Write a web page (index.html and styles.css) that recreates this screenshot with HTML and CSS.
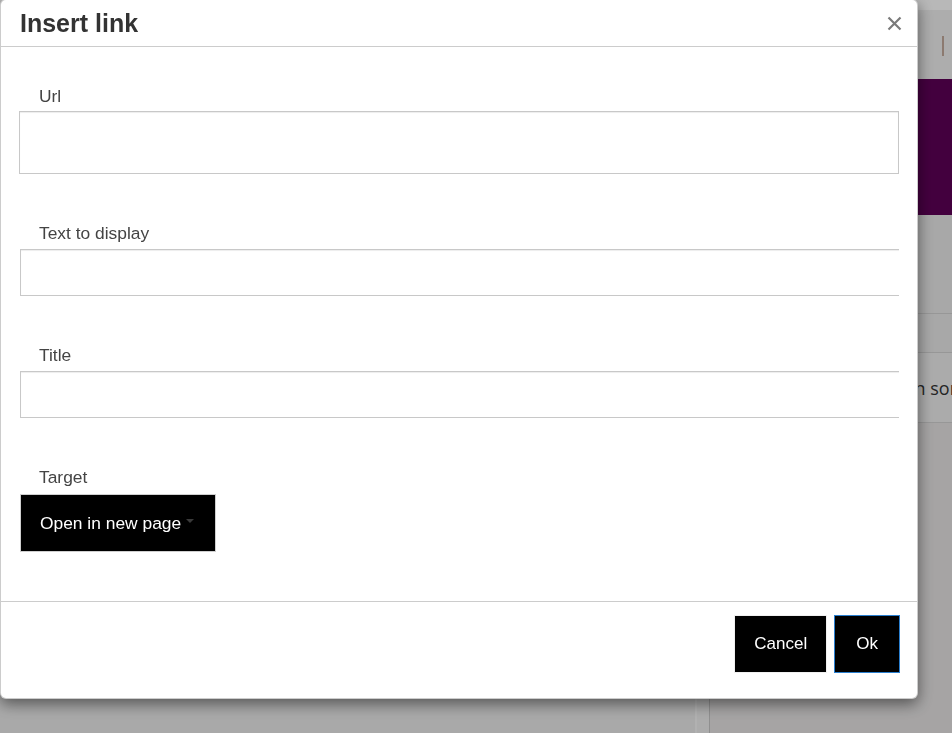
FILE: index.html
```html
<!DOCTYPE html>
<html lang="en">
<head>
<meta charset="utf-8">
<title>Insert link</title>
<link rel="stylesheet" href="styles.css">
</head>
<body>
<div class="page">
  <div class="top-strip"></div>
  <div class="topbar"><span class="divider"></span></div>
  <div class="hero"></div>
  <div class="columns">
    <div class="main"></div>
    <div class="gutter"></div>
    <div class="aside">
      <div class="block block-a"></div>
      <div class="block block-b"></div>
      <div class="block block-c"><span>in some text</span></div>
    </div>
  </div>
</div>
<div class="backdrop"></div>
<div class="modal" role="dialog" aria-labelledby="dlg-title">
  <div class="modal-header">
    <h4 id="dlg-title" class="modal-title">Insert link</h4>
    <button class="close" type="button" aria-label="Close">
      <svg width="15" height="15" viewBox="0 0 15 15"><path d="M1.5 1.5 L13.5 13.5 M13.5 1.5 L1.5 13.5" stroke="#7a7a7a" stroke-width="2.2" fill="none"/></svg>
    </button>
  </div>
  <div class="modal-body">
    <div class="field">
      <label class="field-label label-url" for="f-url">Url</label>
      <input id="f-url" class="input input-url" type="text">
    </div>
    <div class="field">
      <label class="field-label" for="f-text">Text to display</label>
      <div class="clip"><input id="f-text" class="input input-wide" type="text"></div>
    </div>
    <div class="field">
      <label class="field-label" for="f-title">Title</label>
      <div class="clip"><input id="f-title" class="input input-wide" type="text"></div>
    </div>
    <div class="field field-last">
      <label class="field-label label-target">Target</label>
      <button class="select" type="button">Open in new page<span class="caret"></span></button>
    </div>
  </div>
  <div class="modal-footer">
    <button class="btn btn-cancel" type="button">Cancel</button>
    <button class="btn btn-ok" type="button">Ok</button>
  </div>
</div>
</body>
</html>
```
FILE: styles.css
```css
* { box-sizing: border-box; }
html, body { margin: 0; height: 100%; }
body {
  font-family: "Liberation Sans", Arial, sans-serif;
  background: #ebebeb;
  overflow: hidden;
}

/* background page */
.page { width: 952px; height: 733px; display: flex; flex-direction: column; }
.top-strip { height: 10px; background: #ffffff; }
.topbar {
  height: 69px; background: #f0f0f0;
  display: flex; align-items: center; justify-content: flex-end;
  padding-right: 8px;
}
.divider { width: 2px; height: 20px; background: #c2aa9c; margin-top: 3px; }
.hero { height: 136px; background: #5e0057; }
.columns { flex: 1; display: flex; }
.main { flex: none; width: 695px; background: #ebebeb; }
.gutter { flex: none; width: 14px; background: #efefef; border-left: 2px solid #f6f6f6; }
.aside {
  flex: 1; min-width: 0;
  background: #e6e4e4; border-left: 1px solid #c7c7c7;
  display: flex; flex-direction: column;
}
.block { border-bottom: 1px solid #d2d2d2; background: #e9e9e9; }
.block-a { height: 99px; }
.block-b { height: 39px; }
.block-c {
  height: 70px; background: #eeeeee;
  display: flex; align-items: center;
  padding-left: 200px;
  font-family: "Open Sans", sans-serif; font-size: 18px; color: #333;
  white-space: nowrap; overflow: hidden;
}

.backdrop { position: fixed; inset: 0; background: rgba(0, 0, 0, 0.28); }

/* modal */
.modal {
  position: fixed; left: 0; top: -1px;
  width: 918px;
  background: #fff;
  border: 1px solid rgba(0, 0, 0, 0.2);
  border-radius: 6px;
  box-shadow: 0 5px 15px rgba(0, 0, 0, 0.5);
}
.modal-header {
  height: 47px;
  border-bottom: 1px solid #cccccc;
  display: flex; align-items: center; justify-content: space-between;
  padding: 0 15px 0 19px;
}
.modal-title { margin: 0; font-size: 25px; line-height: 30px; font-weight: bold; color: #333; }
.close {
  background: none; border: 0; padding: 0; margin: 0;
  width: 15px; height: 15px; display: block; cursor: pointer;
}
.close svg { display: block; }

.modal-body { padding: 39px 18px 49px 19px; }
.field { margin-bottom: 49px; }
.field-last { margin-bottom: 0; }
.field-label {
  display: block; font-size: 17.4px; line-height: 20px; color: #444;
  padding-left: 19px; margin-bottom: 6px;
}
.label-url { margin-bottom: 5px; }
.label-target { margin-bottom: 7px; }
.input {
  display: block;
  border: 1px solid #c8c8c8;
  box-shadow: inset 0 1px 1px rgba(0, 0, 0, 0.075);
  background: #fff;
  font-family: inherit; font-size: 16px;
  padding: 0 10px; margin: 0; border-radius: 0;
}
.input-url { height: 63px; width: calc(100% + 1px); margin-left: -1px; }
.clip { overflow: hidden; }
.input-wide { height: 47px; width: calc(100% + 4px); }

.select {
  display: inline-flex; align-items: center; gap: 5px;
  height: 58px; padding: 0 21px 0 19px;
  background: #000; color: #fff;
  border: 1px solid #cfcfcf; border-radius: 0;
  font-family: inherit; font-size: 17.4px;
}
.caret {
  width: 0; height: 0;
  border-left: 4px solid transparent; border-right: 4px solid transparent;
  border-top: 4px solid #3a3a3a;
  margin-top: -4px;
}

.modal-footer {
  border-top: 1px solid #cccccc;
  padding: 13px 17px 25px;
  display: flex; justify-content: flex-end; gap: 7px;
}
.btn {
  height: 58px; padding: 0 20px;
  background: #000; color: #fff;
  font-family: inherit; font-size: 17px;
  border-radius: 0; margin: 0;
}
.btn-cancel { border: 1px solid #f0f0f0; padding: 0 19px; }
.btn-ok { border: 1px solid #2a7fcf; padding: 0 21px; }
```
